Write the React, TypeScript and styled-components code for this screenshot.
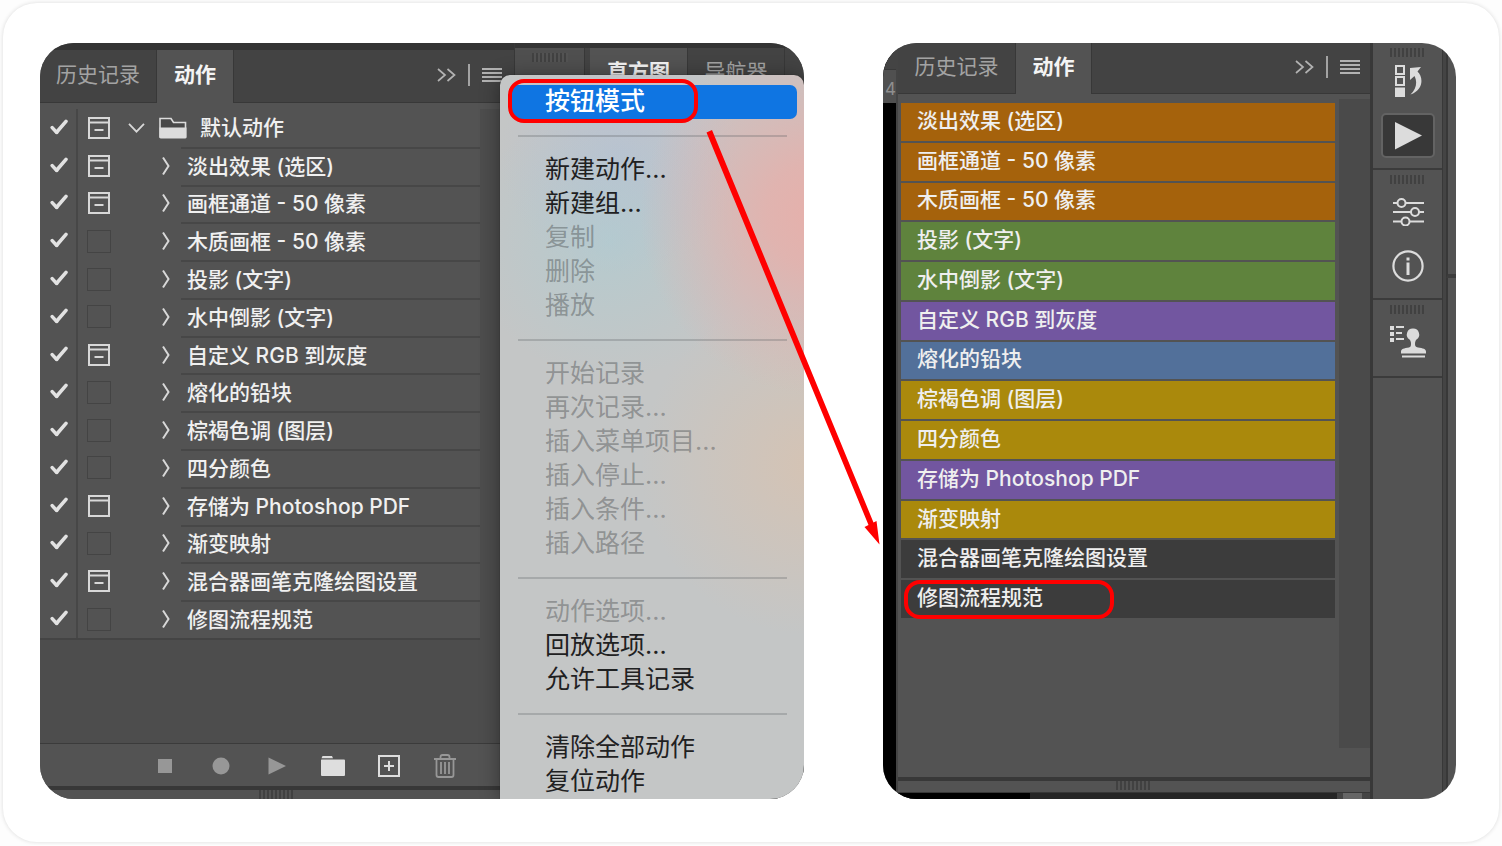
import React from "react";
import styled, { createGlobalStyle, css } from "styled-components";

const GlobalStyle = createGlobalStyle`
  * { box-sizing: border-box; }
  body {
    margin: 0;
    background: #fdfdfd;
    font-family: Inter, "Noto Sans CJK SC", sans-serif;
    font-size: 21px;
  }
  button { font: inherit; border: 0; padding: 0; background: none; cursor: pointer; }
  ul { margin: 0; padding: 0; list-style: none; }
`;

const Card = styled.main`
  display: flex;
  gap: 79px;
  margin: 3px;
  padding: 40px 43px 43px 37px;
  border-radius: 34px;
  background: #fff;
  box-shadow: 0 0 4px rgba(0, 0, 0, 0.14);
`;

const ShotFrame = styled.section<{ $grow: number }>`
  position: relative;
  display: flex;
  flex: ${(p) => p.$grow} 1 0;
  min-width: 0;
`;

const Shot = styled.div`
  position: relative;
  display: flex;
  flex: 1;
  min-width: 0;
  overflow: hidden;
  border-radius: 34px;
  background: #535353;
`;

const Column = styled.div`
  display: flex;
  flex: 1;
  flex-direction: column;
  min-width: 0;
`;

const TabBar = styled.div<{ $height: number }>`
  display: flex;
  height: ${(p) => p.$height}px;
  background: #434343;
  box-shadow: inset 0 -1px #383838;
`;

const Tab = styled.button<{ $active?: boolean; $width: number }>`
  width: ${(p) => p.$width}px;
  padding: 0 0 4px 0;
  border-right: 1px solid #383838;
  color: #a3a3a3;
  line-height: 30px;
  white-space: nowrap;
  ${(p) =>
    p.$active &&
    css`
      background: #535353;
      color: #f4f4f4;
      font-weight: 600;
    `}
`;

const TabTools = styled.div<{ $right: number }>`
  display: flex;
  align-items: center;
  gap: 12px;
  margin-left: auto;
  padding-right: ${(p) => p.$right}px;
  padding-bottom: 3px;
  color: #b2b2b2;
`;

const IconButton = styled.button`
  display: grid;
  place-items: center;
  color: inherit;
`;

const ToolRule = styled.span`
  width: 2px;
  height: 22px;
  background: #a3a3a3;
`;

const Grip = styled.div`
  width: 36px;
  height: 9px;
  background: repeating-linear-gradient(90deg, #414141 0 2px, #535353 2px 4px);
`;

const TopStrip = styled.div<{ $height: number }>`
  height: ${(p) => p.$height}px;
  background: #343434;
`;

const ListArea = styled.div`
  display: flex;
  padding: 6px 0 103px;
  background: linear-gradient(#535353 6px, #4d4d4d 6px);
`;

const ActionList = styled.ul`
  display: flex;
  flex: 1;
  flex-direction: column;
  height: 531px;
  margin-right: 34px;
  border-bottom: 2px solid #444;
  background: #535353;
`;

const ActionRow = styled.li`
  display: flex;
  flex: 1;
  align-items: stretch;
`;

const TickCell = styled.label`
  position: relative;
  display: flex;
  align-items: center;
  width: 38px;
  padding: 0 0 2px 10px;
  border-right: 2px solid #474747;
  color: #e2e2e2;
`;

const Tick = styled.input`
  position: absolute;
  inset: 0;
  width: 100%;
  height: 100%;
  margin: 0;
  opacity: 0;
  &:not(:checked) + svg { visibility: hidden; }
`;

const DialogToggle = styled.button`
  display: grid;
  place-items: center;
  width: 42px;
  color: #d8d8d8;
`;

const EmptyBox = styled.span`
  width: 24px;
  height: 23px;
  border: 1px solid #444;
`;

const ActionName = styled.button<{ $group?: boolean }>`
  display: flex;
  flex: 1;
  align-items: center;
  padding-left: ${(p) => (p.$group ? 8 : 40)}px;
  color: #f0f0f0;
  font-weight: 500;
  text-align: left;
  white-space: nowrap;
`;

const NameText = styled.span<{ $group?: boolean }>`
  display: flex;
  flex: 1;
  align-items: center;
  align-self: stretch;
  margin-left: ${(p) => (p.$group ? 13 : 9)}px;
  padding-left: ${(p) => (p.$group ? 0 : 6)}px;
  border-top: ${(p) => (p.$group ? 0 : 2)}px solid #474747;
  line-height: 30px;
`;

const Footer = styled.div`
  display: flex;
  align-items: center;
  height: 43px;
  gap: 30px;
  padding: 2px 0 0 112px;
  border-top: 1px solid #3b3b3b;
  background: #535353;
`;

const FooterButton = styled(IconButton)<{ $bright?: boolean }>`
  width: 26px;
  height: 26px;
  color: ${(p) => (p.$bright ? "#dedede" : "#979797")};
`;

const BottomRule = styled.div`
  height: 4px;
  background: #383838;
`;

const GripBar = styled.div<{ $height: number }>`
  display: flex;
  justify-content: center;
  height: ${(p) => p.$height}px;
  background: #535353;
`;

const SideColumn = styled.div`
  display: flex;
  flex-direction: column;
  width: 290px;
  border-left: 1px solid #383838;
`;

const SidePanels = styled.div`
  display: flex;
  height: 52px;
  background: #434343;
`;

const SideHandle = styled.div`
  display: flex;
  justify-content: center;
  width: 70px;
  padding-top: 5px;
  margin-right: 5px;
  border-right: 1px solid #383838;
  background: #4f4f4f;
`;

const Menu = styled.div`
  position: absolute;
  top: 32px;
  right: 0;
  display: flex;
  flex-direction: column;
  width: 304px;
  padding: 10px 7px 0 10px;
  border-radius: 10px 10px 0 0;
  background:
    radial-gradient(circle 180px at 320px 140px, rgba(236, 172, 166, 0.85), rgba(236, 172, 166, 0.7) 30%, rgba(236, 172, 166, 0)),
    radial-gradient(circle 140px at 110px 165px, rgba(166, 206, 214, 0.5), rgba(166, 206, 214, 0)),
    radial-gradient(circle 120px at 120px 80px, rgba(180, 188, 216, 0.5), rgba(180, 188, 216, 0)),
    radial-gradient(circle 170px at 310px 390px, rgba(218, 194, 174, 0.75), rgba(218, 194, 174, 0)),
    #c4c6c6;
  box-shadow: 0 2px 20px rgba(0, 0, 0, 0.4), 0 0 1px #222;
`;

const MenuItem = styled.button<{ $selected?: boolean }>`
  position: relative;
  height: 34px;
  padding: 0 0 2px 35px;
  border-radius: 7px;
  background: ${(p) => (p.$selected ? "#0f75e2" : "transparent")};
  color: ${(p) => (p.$selected ? "#fff" : "#1f2122")};
  font-size: 25px;
  font-weight: ${(p) => (p.$selected ? 500 : 400)};
  line-height: 32px;
  text-align: left;
  white-space: nowrap;
  &:disabled { color: rgba(60, 64, 66, 0.4); }
`;

const MenuRule = styled.hr`
  width: auto;
  height: 2px;
  margin: 16px 10px 16px 8px;
  border: 0;
  background: rgba(90, 94, 96, 0.28);
`;

const Callout = styled.span`
  position: absolute;
  border: 4px solid #ff0000;
  border-radius: 16px;
  pointer-events: none;
`;

const MenuCallout = styled(Callout)`
  top: 4px;
  left: 8px;
  width: 190px;
  height: 44px;
`;

const ButtonCallout = styled(Callout)`
  top: 0;
  left: 3px;
  width: 210px;
  height: 39px;
`;

const Arrow = styled.svg`
  position: absolute;
  top: 80px;
  right: -80px;
  pointer-events: none;
`;

const Canvas = styled.div`
  display: flex;
  flex-direction: column;
  width: 13px;
  background: #000;
`;

const Ruler = styled.div`
  display: flex;
  align-items: flex-end;
  height: 60px;
  padding-left: 2px;
  background: linear-gradient(#444 26px, #393939 26px 27px, #505050 27px);
  color: #8f8f8f;
  font-size: 17px;
  line-height: 27px;
`;

const Panel = styled(Column)`
  border-left: 2px solid #444;
`;

const ButtonArea = styled.div`
  display: flex;
  gap: 4px;
  padding: 5px 0 29px 3px;
`;

const ButtonList = styled.div`
  display: flex;
  flex: 1;
  flex-direction: column;
  gap: 2px;
  height: 515px;
  margin-top: 4px;
`;

const ActionButton = styled.button<{ $tone: string }>`
  position: relative;
  flex: 1;
  padding: 0 0 2px 16px;
  background: ${(p) => p.$tone};
  color: #efefef;
  font-weight: 500;
  line-height: 30px;
  text-align: left;
  white-space: nowrap;
`;

const ScrollTrack = styled.div`
  width: 31px;
  height: 649px;
  background: #4a4a4a;
`;

const DocumentEdge = styled.div`
  display: flex;
  justify-content: space-between;
  height: 7px;
  background: #262626;
  border-top: 1px solid #383838;
`;

const EdgeBlack = styled.span`
  width: 132px;
  background: #000;
`;

const EdgeThumb = styled.span`
  width: 33px;
  border: solid #444;
  border-width: 0 8px 0 6px;
  background: #666;
`;

const Dock = styled.div`
  width: 73px;
  border: solid #383838;
  border-width: 0 1px 0 3px;
`;

const DockGroup = styled.div<{ $height: number }>`
  display: flex;
  flex-direction: column;
  align-items: center;
  height: ${(p) => p.$height}px;
  padding-top: 5px;
  border-bottom: 2px solid #3b3b3b;
  color: #dcdcdc;
`;

const DockButton = styled(IconButton)<{ $height: number; $active?: boolean }>`
  flex: none;
  width: 54px;
  height: ${(p) => p.$height}px;
  ${(p) =>
    p.$active &&
    css`
      height: 45px;
      margin-top: 8px;
      border: 2px solid #636363;
      border-radius: 5px;
      background: #383838;
    `}
`;

const DockEdge = styled.div`
  display: flex;
  flex-direction: column;
  width: 13px;
  border-left: 3px solid #444;
`;

const EdgePiece = styled.div<{ $height?: number }>`
  height: ${(p) => (p.$height ? p.$height + "px" : "auto")};
  flex: ${(p) => (p.$height ? "none" : 1)};
  border-left: 2px solid #383838;
  border-bottom: ${(p) => (p.$height ? 4 : 0)}px solid #3d3d3d;
`;

const CheckIcon = () => (
  <svg width="18" height="16" viewBox="0 0 18 16" fill="none" stroke="currentColor" strokeWidth="3.6" strokeLinecap="round" strokeLinejoin="round">
    <path d="M2.2 8.6 6.6 13.4" />
    <path d="M6.6 13.2 16 2.4" />
  </svg>
);

const DialogIcon = ({ dash }: { dash: boolean }) => (
  <svg width="22" height="22" viewBox="0 0 22 22" fill="none" stroke="currentColor" strokeWidth="2">
    <path d="M1 1h20v20H1zM1 5.5h20" />
    {dash && <path d="M6.5 13h9" />}
  </svg>
);

const ChevronDown = () => (
  <svg width="17" height="12" viewBox="0 0 17 12" fill="none" stroke="#d8d8d8" strokeWidth="1.8">
    <path d="M1 1.8 8.5 9.6 16 1.8" />
  </svg>
);

const ChevronRight = () => (
  <svg width="12" height="20" viewBox="0 0 12 20" fill="none" stroke="#d8d8d8" strokeWidth="2">
    <path d="M3 1.5 8.5 10 3 18.5" />
  </svg>
);

const FolderSvg = styled.svg`
  margin-left: 14px;
`;

const OpenFolder = () => (
  <FolderSvg width="28" height="22" viewBox="0 0 28 22">
    <path d="M1 20V1.5h11l2.500 4H26.500V20z" fill="#484848" stroke="#dcdcdc" strokeWidth="1.6" />
    <path d="M.5 10.5h27V20a1.5 1.5 0 0 1-1.5 1.5H2A1.5 1.5 0 0 1 .5 20z" fill="#dcdcdc" />
  </FolderSvg>
);

const Expand = () => (
  <svg width="19" height="14" viewBox="0 0 19 14" fill="none" stroke="currentColor" strokeWidth="1.7">
    <path d="M1 1l7 6-7 6M10.5 1l7 6-7 6" />
  </svg>
);

const Lines = () => (
  <svg width="20" height="14" viewBox="0 0 20 14" fill="currentColor">
    <path d="M0 0h20v2H0zM0 4h20v2H0zM0 8h20v2H0zM0 12h20v2H0z" />
  </svg>
);

const StopIcon = () => (
  <svg width="14" height="14"><path d="M0 0h14v14H0z" fill="currentColor" /></svg>
);
const RecordIcon = () => (
  <svg width="18" height="18"><circle cx="9" cy="9" r="8.5" fill="currentColor" /></svg>
);
const PlayIcon = () => (
  <svg width="18" height="18"><path d="M.5.5 18 9 .5 17.5z" fill="currentColor" /></svg>
);
const FolderIcon = () => (
  <svg width="24" height="20" fill="currentColor">
    <path d="M1.5 0h9.5l1 2.200H.5zM.5 3.500H23a1 1 0 0 1 1 1V19a1 1 0 0 1-1 1H1a1 1 0 0 1-1-1V4z" />
  </svg>
);
const PlusBoxIcon = () => (
  <svg width="22" height="22" fill="none" stroke="currentColor" strokeWidth="2">
    <path d="M1 1h20v20H1zM11 6v10M6 11h10" />
  </svg>
);
const TrashIcon = () => (
  <svg width="22" height="24" fill="none" stroke="currentColor" strokeWidth="1.8">
    <path d="M0 5h22M6.5 5V3Q6.5 1 8.5 1h5Q15.5 1 15.5 3V5M2.5 5V21Q2.5 23 4.5 23h13Q19.5 23 19.5 21V5M7 8v12M11 8v12M15 8v12" />
  </svg>
);

const HistoryIcon = () => (
  <svg width="30" height="34" viewBox="0 0 30 34" fill="none">
    <path d="M3 2h8v8H3zM3 13h8v8H3z" stroke="currentColor" strokeWidth="2" />
    <path d="M2 23.5h10V33H2z" fill="currentColor" />
    <path d="M17 4 28 3 24.500 7.500C31 14 30 26 17.500 30.500 23.500 25 24.500 18 21.500 12L17 16z" fill="currentColor" />
  </svg>
);

const BigPlay = () => (
  <svg width="28" height="28"><path d="M1 0 28 13.5 1 27.5z" fill="currentColor" /></svg>
);

const SlidersIcon = () => (
  <svg width="32" height="28" viewBox="0 0 32 28" fill="#535353" stroke="currentColor" strokeWidth="2">
    <path d="M1 5h31M1 14h31M1 23.5h31" />
    <circle cx="9.5" cy="5" r="4" />
    <circle cx="23" cy="14" r="4" />
    <circle cx="13.5" cy="23.5" r="4" />
  </svg>
);

const InfoIcon = () => (
  <svg width="32" height="32" viewBox="0 0 32 32" fill="none" stroke="currentColor">
    <circle cx="16" cy="16" r="14.6" strokeWidth="2.2" />
    <path d="M16 12.5V25M16 7.5v3" strokeWidth="3" />
  </svg>
);

const StampIcon = () => (
  <svg width="36" height="32" viewBox="0 0 36 32" fill="currentColor">
    <path d="M0 0h4v4H0zM0 6h4v4H0zM0 12h4v4H0zM6 0h8v2H6zM6 6h6v2H6zM6 12h8v2H6z" />
    <path d="M23 2.500a6 6 0 0 1 3.500 11C25.500 14.500 25 16 25 18c0 2 .5 3 3 3.500 5 .8 8 1.500 8 4V27.500H11V25.500c0-2.500 3-3.200 8-4 1.500-.3 2-1.500 2-3.500 0-2-.5-3.500-1.500-4.500a6 6 0 0 1 3.500-11z" />
    <path d="M12 29.5h23v2H12z" />
  </svg>
);

type Dialog = "dash" | "open" | "none";

const actions: { name: string; dialog: Dialog; tone: string }[] = [
  { name: "淡出效果 (选区)", dialog: "dash", tone: "#a5620c" },
  { name: "画框通道 - 50 像素", dialog: "dash", tone: "#a5620c" },
  { name: "木质画框 - 50 像素", dialog: "none", tone: "#a5620c" },
  { name: "投影 (文字)", dialog: "none", tone: "#5f833d" },
  { name: "水中倒影 (文字)", dialog: "none", tone: "#5f833d" },
  { name: "自定义 RGB 到灰度", dialog: "dash", tone: "#7256a0" },
  { name: "熔化的铅块", dialog: "none", tone: "#52709a" },
  { name: "棕褐色调 (图层)", dialog: "none", tone: "#aa890c" },
  { name: "四分颜色", dialog: "none", tone: "#aa890c" },
  { name: "存储为 Photoshop PDF", dialog: "open", tone: "#7256a0" },
  { name: "渐变映射", dialog: "none", tone: "#aa890c" },
  { name: "混合器画笔克隆绘图设置", dialog: "dash", tone: "#3c3c3c" },
  { name: "修图流程规范", dialog: "none", tone: "#3c3c3c" },
];

const menuGroups: { label: string; disabled?: boolean; selected?: boolean }[][] = [
  [{ label: "按钮模式", selected: true }],
  [
    { label: "新建动作..." },
    { label: "新建组..." },
    { label: "复制", disabled: true },
    { label: "删除", disabled: true },
    { label: "播放", disabled: true },
  ],
  [
    { label: "开始记录", disabled: true },
    { label: "再次记录...", disabled: true },
    { label: "插入菜单项目...", disabled: true },
    { label: "插入停止...", disabled: true },
    { label: "插入条件...", disabled: true },
    { label: "插入路径", disabled: true },
  ],
  [{ label: "动作选项...", disabled: true }, { label: "回放选项..." }, { label: "允许工具记录" }],
  [{ label: "清除全部动作" }, { label: "复位动作" }],
];

const Row = ({ name, dialog, group }: { name: string; dialog: Dialog; group?: boolean }) => (
  <ActionRow>
    <TickCell>
      <Tick type="checkbox" defaultChecked aria-label={name} />
      <CheckIcon />
    </TickCell>
    <DialogToggle aria-label={"切换对话 " + name}>
      {dialog === "none" ? <EmptyBox /> : <DialogIcon dash={dialog === "dash"} />}
    </DialogToggle>
    <ActionName $group={group}>
      {group ? (
        <>
          <ChevronDown />
          <OpenFolder />
        </>
      ) : (
        <ChevronRight />
      )}
      <NameText $group={group}>{name}</NameText>
    </ActionName>
  </ActionRow>
);

const Tools = ({ right }: { right: number }) => (
  <TabTools $right={right}>
    <IconButton aria-label="折叠面板"><Expand /></IconButton>
    <ToolRule />
    <IconButton aria-label="面板菜单"><Lines /></IconButton>
  </TabTools>
);

const ListPanel = () => (
  <Column>
    <TopStrip $height={7} />
    <TabBar $height={53}>
      <Tab $width={117}>历史记录</Tab>
      <Tab $width={77} $active>动作</Tab>
      <Tools right={12} />
    </TabBar>
    <ListArea>
      <ActionList>
        <Row name="默认动作" dialog="dash" group />
        {actions.map((a) => (
          <Row key={a.name} name={a.name} dialog={a.dialog} />
        ))}
      </ActionList>
    </ListArea>
    <Footer>
      <FooterButton aria-label="停止"><StopIcon /></FooterButton>
      <FooterButton aria-label="记录"><RecordIcon /></FooterButton>
      <FooterButton aria-label="播放"><PlayIcon /></FooterButton>
      <FooterButton aria-label="新建组" $bright><FolderIcon /></FooterButton>
      <FooterButton aria-label="新建动作" $bright><PlusBoxIcon /></FooterButton>
      <FooterButton aria-label="删除"><TrashIcon /></FooterButton>
    </Footer>
    <BottomRule />
    <GripBar $height={9}><Grip /></GripBar>
  </Column>
);

const ContextMenu = () => (
  <Menu>
    {menuGroups.map((group, i) => (
      <React.Fragment key={i}>
        {i > 0 && <MenuRule />}
        {group.map((m) => (
          <MenuItem key={m.label} disabled={m.disabled} $selected={m.selected}>
            {m.label}
          </MenuItem>
        ))}
      </React.Fragment>
    ))}
    <MenuCallout />
  </Menu>
);

export default function App() {
  return (
    <>
      <GlobalStyle />
      <Card>
        <ShotFrame $grow={764}>
          <Shot>
            <ListPanel />
            <SideColumn>
              <TopStrip $height={5} />
              <SidePanels>
                <SideHandle><Grip /></SideHandle>
                <Tab $width={98} $active>直方图</Tab>
                <Tab $width={97}>导航器</Tab>
              </SidePanels>
            </SideColumn>
            <ContextMenu />
          </Shot>
          <Arrow width="180" height="430" viewBox="0 0 180 430" fill="#ff0000">
            <path d="M2.500 9.500 8 7 169.500 399.500 172.500 398 175.500 421.500 160.500 404 164.500 402z" />
          </Arrow>
        </ShotFrame>
        <ShotFrame $grow={573}>
          <Shot>
            <Canvas><Ruler>4</Ruler></Canvas>
            <Panel>
              <TabBar $height={51}>
                <Tab $width={118}>历史记录</Tab>
                <Tab $width={76} $active>动作</Tab>
                <Tools right={10} />
              </TabBar>
              <ButtonArea>
                <ButtonList>
                  {actions.map((a, i) => (
                    <ActionButton key={a.name} $tone={a.tone}>
                      {a.name}
                      {i === actions.length - 1 && <ButtonCallout />}
                    </ActionButton>
                  ))}
                </ButtonList>
                <ScrollTrack />
              </ButtonArea>
              <BottomRule />
              <GripBar $height={11}><Grip /></GripBar>
              <DocumentEdge>
                <EdgeBlack />
                <EdgeThumb />
              </DocumentEdge>
            </Panel>
            <Dock>
              <DockGroup $height={127}>
                <Grip />
                <DockButton $height={48} aria-label="历史记录"><HistoryIcon /></DockButton>
                <DockButton $height={45} $active aria-label="动作"><BigPlay /></DockButton>
              </DockGroup>
              <DockGroup $height={130}>
                <Grip />
                <DockButton $height={56} aria-label="属性"><SlidersIcon /></DockButton>
                <DockButton $height={52} aria-label="信息"><InfoIcon /></DockButton>
              </DockGroup>
              <DockGroup $height={78}>
                <Grip />
                <DockButton $height={56} aria-label="仿制源"><StampIcon /></DockButton>
              </DockGroup>
            </Dock>
            <DockEdge>
              <EdgePiece $height={235} />
              <EdgePiece />
            </DockEdge>
          </Shot>
        </ShotFrame>
      </Card>
    </>
  );
}
